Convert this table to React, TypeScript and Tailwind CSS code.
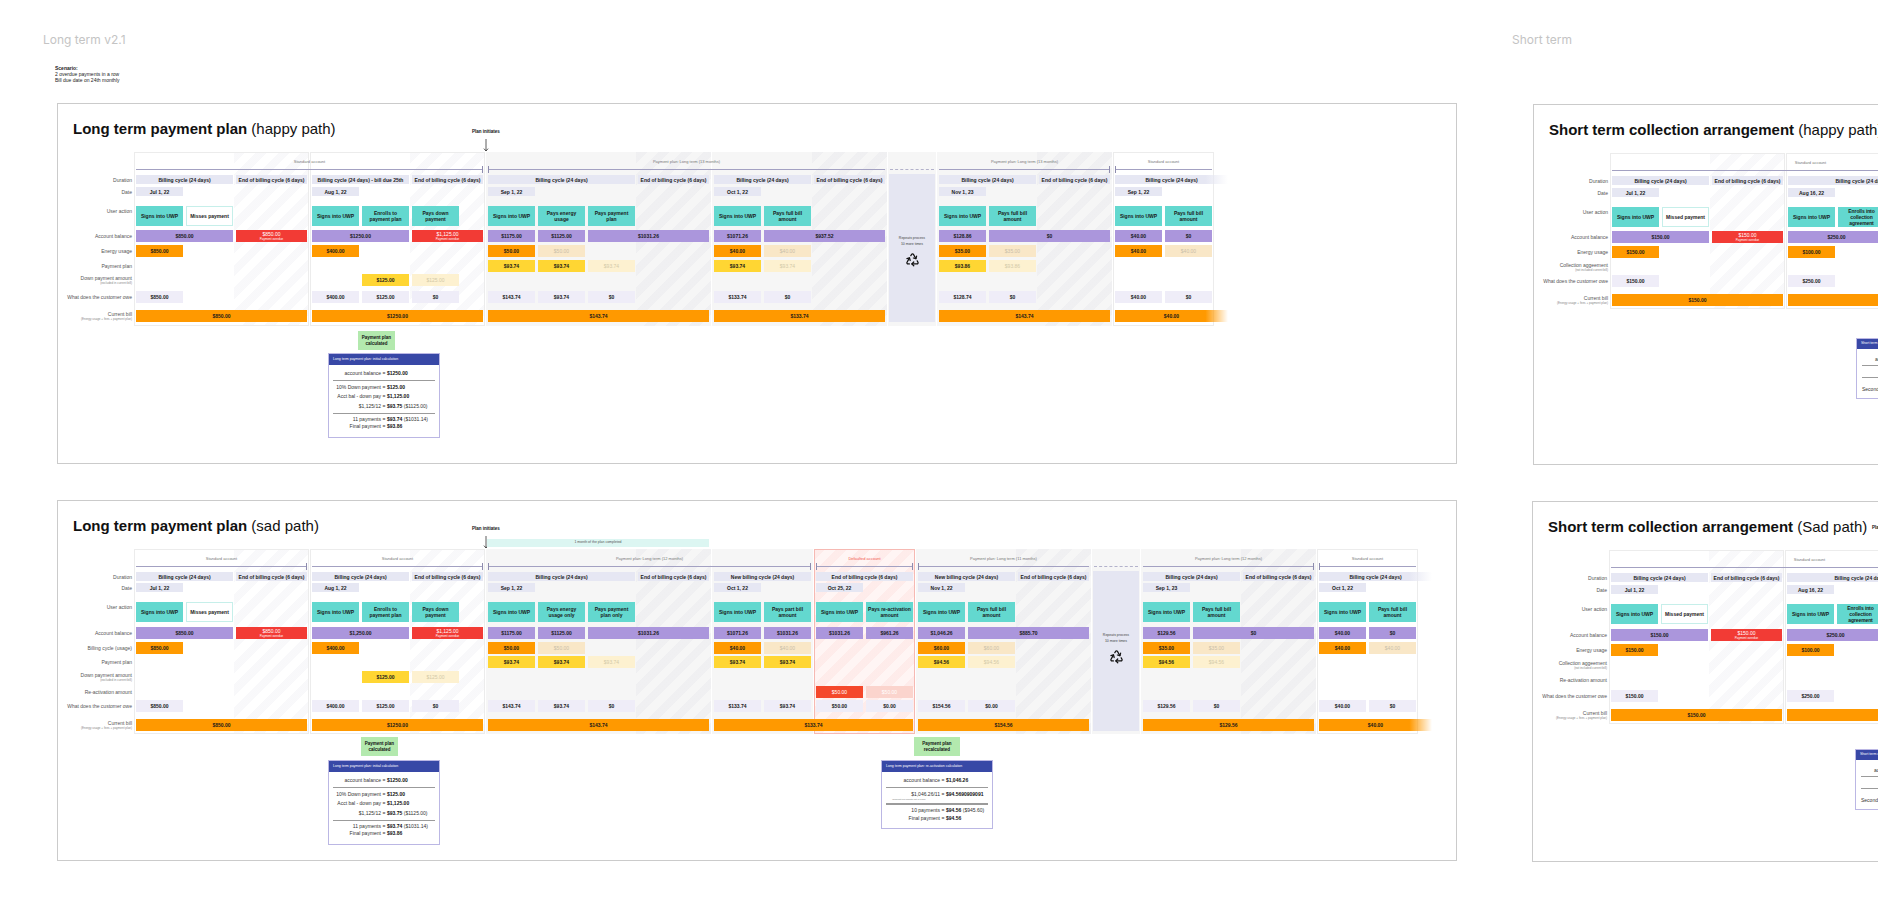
import { Recycle } from "lucide-react";
import type { ReactNode } from "react";

type K = "d" | "df" | "a" | "at" | "m" | "p" | "r" | "o" | "of" | "y" | "yf" | "w" | "x" | "xf" | "b" | "bf" | "bz" | "-";
type CellT = [K, string, string?, string?];
type Sec = { tone: "white" | "gray" | "red" | "repeat"; w: string; cells?: Record<string, CellT[]>; note?: string };
type Group = { label?: string; red?: boolean; l?: boolean; r?: boolean; dashed?: boolean; secs: Sec[] };
type Row = { key: string; label: string; sub?: string; cls: string; top?: boolean };

// cell widths
const A = "w-[47px]";
const AB = "w-[97px]";
const ABC = "w-[147px]";
const C = "w-[71px]";
const BC = "w-[121px]";
const F2 = "w-[171px]";
const F3 = "w-[221px]";
const FADE = "w-[113px]";

// section widths
const S2 = "w-[175px]";
const S3 = "w-[225px]";
const S1 = "w-[101px]";

const KIND: Record<K, string> = {
  d: "bg-[#e6e7f3] font-bold px-[2px]",
  df: "bg-[linear-gradient(to_right,#e6e7f3_80%,rgba(230,231,243,0))] font-bold px-[2px]",
  a: "bg-[#63d8cf] font-bold px-[2px]",
  at: "bg-[#63d8cf] font-bold px-0 tracking-[-0.1px]",
  m: "bg-white font-bold px-[2px] shadow-[inset_0_0_0_1px_#c6efea]",
  p: "bg-[#ab96dc] font-bold px-[2px]",
  r: "bg-[#f23b35] text-white px-[2px]",
  o: "bg-[#ff9a00] font-bold px-[2px]",
  of: "bg-[#f9e7c7] text-[#c9bea9] px-[2px]",
  y: "bg-[#ffd633] font-bold px-[2px]",
  yf: "bg-[#fdf1d0] text-[#d3c9a8] px-[2px]",
  w: "bg-[#efedf8] font-bold px-[2px]",
  x: "bg-[#f5482b] text-white px-[2px]",
  xf: "bg-[#fbd4cd] text-white px-[2px]",
  b: "bg-[#ff9900] font-bold px-[2px]",
  bf: "bg-[linear-gradient(to_right,#ff9900_80%,rgba(255,153,0,0))] font-bold px-[2px]",
  bz: "relative z-10 bg-[#ff9900] font-bold px-[2px]",
  "-": "",
};

const TONE = {
  white: "bg-white shadow-[inset_0_0_0_1px_#ececec]",
  gray: "bg-[#f6f6f6]",
  red: "bg-[#fff5f4] bg-[repeating-linear-gradient(135deg,rgba(242,90,80,0.06)_0px,rgba(242,90,80,0.06)_8px,transparent_8px,transparent_16px)] shadow-[inset_0_0_0_1px_#f6b9b3]",
  repeat: "bg-[#f6f6f6]",
};

const STRIPE =
  "bg-[repeating-linear-gradient(135deg,rgba(90,90,140,0.04)_0px,rgba(90,90,140,0.04)_8px,transparent_8px,transparent_16px)] bg-no-repeat bg-right bg-[length:75px_100%]";

const END = "End of billing cycle (6 days)";
const dur2 = (t = "Billing cycle (24 days)"): CellT[] => [["d", AB, t], ["d", C, END]];
const dur3: CellT[] = [["d", ABC, "Billing cycle (24 days)"], ["d", C, END]];
const date = (t: string): CellT[] => [["d", A, t]];
const signs: CellT = ["a", A, "Signs into UWP"];

/* ---------- long term, happy path ---------- */

const happyRows: Row[] = [
  { key: "dur", label: "Duration", cls: "h-[9px]" },
  { key: "date", label: "Date", cls: "mt-[3px] h-[9px]" },
  { key: "act", label: "User action", cls: "mt-[10px] h-[20px]", top: true },
  { key: "bal", label: "Account balance", cls: "mt-[4px] h-[12px]" },
  { key: "en", label: "Energy usage", cls: "mt-[3px] h-[12px]" },
  { key: "plan", label: "Payment plan", cls: "mt-[3px] h-[12px]" },
  { key: "down", label: "Down payment amount", sub: "(excluded in current bill)", cls: "mt-[2px] h-[12px]" },
  { key: "owe", label: "What does the customer owe", cls: "mt-[5px] h-[12px]" },
  { key: "bill", label: "Current bill", sub: "(Energy usage + fees + payment plan)", cls: "mt-[7px] h-[12px]" },
];

const julSec: Sec = {
  tone: "white",
  w: S2,
  cells: {
    dur: dur2(),
    date: date("Jul 1, 22"),
    act: [signs, ["m", A, "Misses payment"]],
    bal: [["p", AB, "$850.00"], ["r", C, "$850.00", "Payment overdue"]],
    en: [["o", A, "$850.00"]],
    owe: [["w", A, "$850.00"]],
    bill: [["b", F2, "$850.00"]],
  },
};

const augSec = (durText: string, bal: string): Sec => ({
  tone: "white",
  w: S2,
  cells: {
    dur: dur2(durText),
    date: date("Aug 1, 22"),
    act: [signs, ["a", A, "Enrolls to payment plan"], ["a", A, "Pays down payment"]],
    bal: [["p", AB, bal], ["r", C, "$1,125.00", "Payment overdue"]],
    en: [["o", A, "$400.00"]],
    down: [["-", A], ["y", A, "$125.00"], ["yf", A, "$125.00"]],
    owe: [["w", A, "$400.00"], ["w", A, "$125.00"], ["w", A, "$0"]],
    bill: [["b", F2, "$1250.00"]],
  },
});

const sepSec = (a2: string, a3: string): Sec => ({
  tone: "gray",
  w: S3,
  cells: {
    dur: dur3,
    date: date("Sep 1, 22"),
    act: [signs, ["a", A, a2], ["a", A, a3]],
    bal: [["p", A, "$1175.00"], ["p", A, "$1125.00"], ["p", BC, "$1031.26"]],
    en: [["o", A, "$50.00"], ["of", A, "$50.00"]],
    plan: [["y", A, "$93.74"], ["y", A, "$93.74"], ["yf", A, "$93.74"]],
    owe: [["w", A, "$143.74"], ["w", A, "$93.74"], ["w", A, "$0"]],
    bill: [["b", F3, "$143.74"]],
  },
});

const repeat: Sec = { tone: "repeat", w: "w-[48px]", note: "10 more times" };

const lastStd = (d: string): Sec => ({
  tone: "white",
  w: S1,
  cells: {
    dur: [["df", FADE, "Billing cycle (24 days)"]],
    date: date(d),
    act: [signs, ["a", A, "Pays full bill amount"]],
    bal: [["p", A, "$40.00"], ["p", A, "$0"]],
    en: [["o", A, "$40.00"], ["of", A, "$40.00"]],
    owe: [["w", A, "$40.00"], ["w", A, "$0"]],
    bill: [["bf", FADE, "$40.00"]],
  },
});

const happyGroups: Group[] = [
  { label: "Standard account", r: true, secs: [julSec, augSec("Billing cycle (24 days) - bill due 25th", "$1250.00")] },
  {
    label: "Payment plan: Long term (13 months)",
    l: true,
    secs: [
      sepSec("Pays energy usage", "Pays payment plan"),
      {
        tone: "gray",
        w: S2,
        cells: {
          dur: dur2(),
          date: date("Oct 1, 22"),
          act: [signs, ["a", A, "Pays full bill amount"]],
          bal: [["p", A, "$1071.26"], ["p", BC, "$937.52"]],
          en: [["o", A, "$40.00"], ["of", A, "$40.00"]],
          plan: [["y", A, "$93.74"], ["yf", A, "$93.74"]],
          owe: [["w", A, "$133.74"], ["w", A, "$0"]],
          bill: [["b", F2, "$133.74"]],
        },
      },
    ],
  },
  { dashed: true, secs: [repeat] },
  {
    label: "Payment plan: Long term (13 months)",
    r: true,
    secs: [
      {
        tone: "gray",
        w: S2,
        cells: {
          dur: dur2(),
          date: date("Nov 1, 23"),
          act: [signs, ["a", A, "Pays full bill amount"]],
          bal: [["p", A, "$128.86"], ["p", BC, "$0"]],
          en: [["o", A, "$35.00"], ["of", A, "$35.00"]],
          plan: [["y", A, "$93.86"], ["yf", A, "$93.86"]],
          owe: [["w", A, "$128.74"], ["w", A, "$0"]],
          bill: [["b", F2, "$143.74"]],
        },
      },
    ],
  },
  { label: "Standard account", l: true, secs: [lastStd("Sep 1, 22")] },
];

/* ---------- long term, sad path ---------- */

const sadRows: Row[] = [
  { key: "dur", label: "Duration", cls: "h-[9px]" },
  { key: "date", label: "Date", cls: "mt-[2px] h-[9px]" },
  { key: "act", label: "User action", cls: "mt-[10px] h-[20px]", top: true },
  { key: "bal", label: "Account balance", cls: "mt-[5px] h-[12px]" },
  { key: "en", label: "Billing cycle (usage)", cls: "mt-[3px] h-[12px]" },
  { key: "plan", label: "Payment plan", cls: "mt-[2px] h-[12px]" },
  { key: "down", label: "Down payment amount", sub: "(excluded in current bill)", cls: "mt-[3px] h-[12px]" },
  { key: "react", label: "Re-activation amount", cls: "mt-[3px] h-[12px]" },
  { key: "owe", label: "What does the customer owe", cls: "mt-[2px] h-[12px]" },
  { key: "bill", label: "Current bill", sub: "(Energy usage + fees + payment plan)", cls: "mt-[7px] h-[12px]" },
];

const sadGroups: Group[] = [
  { label: "Standard account", r: true, secs: [julSec] },
  { label: "Standard account", r: true, secs: [augSec("Billing cycle (24 days)", "$1,250.00")] },
  {
    label: "Payment plan: Long term (12 months)",
    l: true,
    r: true,
    secs: [
      sepSec("Pays energy usage only", "Pays payment plan only"),
      {
        tone: "gray",
        w: S1,
        cells: {
          dur: [["d", AB, "New billing cycle (24 days)"]],
          date: date("Oct 1, 22"),
          act: [signs, ["a", A, "Pays part bill amount"]],
          bal: [["p", A, "$1071.26"], ["p", A, "$1031.26"]],
          en: [["o", A, "$40.00"], ["of", A, "$40.00"]],
          plan: [["y", A, "$93.74"], ["y", A, "$93.74"]],
          owe: [["w", A, "$133.74"], ["w", A, "$93.74"]],
          bill: [["bz", "w-[199px]", "$133.74"]],
        },
      },
    ],
  },
  {
    label: "Defaulted account",
    red: true,
    l: true,
    r: true,
    secs: [
      {
        tone: "red",
        w: S1,
        cells: {
          dur: [["d", AB, END]],
          date: date("Oct 25, 22"),
          act: [signs, ["a", A, "Pays re-activation amount"]],
          bal: [["p", A, "$1031.26"], ["p", A, "$961.26"]],
          react: [["x", A, "$50.00"], ["xf", A, "$50.00"]],
          owe: [["w", A, "$50.00"], ["w", A, "$0.00"]],
        },
      },
    ],
  },
  {
    label: "Payment plan: Long term (11 months)",
    l: true,
    secs: [
      {
        tone: "gray",
        w: S2,
        cells: {
          dur: dur2("New billing cycle (24 days)"),
          date: date("Nov 1, 22"),
          act: [signs, ["a", A, "Pays full bill amount"]],
          bal: [["p", A, "$1,046.26"], ["p", BC, "$885.70"]],
          en: [["o", A, "$60.00"], ["of", A, "$60.00"]],
          plan: [["y", A, "$94.56"], ["yf", A, "$94.56"]],
          owe: [["w", A, "$154.56"], ["w", A, "$0.00"]],
          bill: [["b", F2, "$154.56"]],
        },
      },
    ],
  },
  { dashed: true, secs: [repeat] },
  {
    label: "Payment plan: Long term (12 months)",
    r: true,
    secs: [
      {
        tone: "gray",
        w: S2,
        cells: {
          dur: dur2(),
          date: date("Sep 1, 23"),
          act: [signs, ["a", A, "Pays full bill amount"]],
          bal: [["p", A, "$129.56"], ["p", BC, "$0"]],
          en: [["o", A, "$35.00"], ["of", A, "$35.00"]],
          plan: [["y", A, "$94.56"], ["yf", A, "$94.56"]],
          owe: [["w", A, "$129.56"], ["w", A, "$0"]],
          bill: [["b", F2, "$129.56"]],
        },
      },
    ],
  },
  { label: "Standard account", l: true, secs: [lastStd("Oct 1, 22")] },
];

/* ---------- short term ---------- */

const shortHappyRows: Row[] = [
  { key: "dur", label: "Duration", cls: "h-[9px]" },
  { key: "date", label: "Date", cls: "mt-[3px] h-[9px]" },
  { key: "act", label: "User action", cls: "mt-[10px] h-[20px]", top: true },
  { key: "bal", label: "Account balance", cls: "mt-[4px] h-[12px]" },
  { key: "en", label: "Energy usage", cls: "mt-[3px] h-[12px]" },
  { key: "coll", label: "Collection aggeement", sub: "(not included current bill)", cls: "mt-[3px] h-[12px]" },
  { key: "owe", label: "What does the customer owe", cls: "mt-[2px] h-[12px]" },
  { key: "bill", label: "Current bill", sub: "(Energy usage + fees + payment plan)", cls: "mt-[7px] h-[12px]" },
];

const shortSadRows: Row[] = [
  { key: "dur", label: "Duration", cls: "h-[9px]" },
  { key: "date", label: "Date", cls: "mt-[3px] h-[9px]" },
  { key: "act", label: "User action", cls: "mt-[10px] h-[20px]", top: true },
  { key: "bal", label: "Account balance", cls: "mt-[5px] h-[12px]" },
  { key: "en", label: "Energy usage", cls: "mt-[3px] h-[12px]" },
  { key: "coll", label: "Collection aggeement", sub: "(not included current bill)", cls: "mt-[3px] h-[12px]" },
  { key: "react", label: "Re-activation amount", cls: "mt-[3px] h-[12px]" },
  { key: "owe", label: "What does the customer owe", cls: "mt-[4px] h-[12px]" },
  { key: "bill", label: "Current bill", sub: "(Energy usage + fees + payment plan)", cls: "mt-[7px] h-[12px]" },
];

const shortGroups: Group[] = [
  {
    label: "Standard account",
    secs: [
      {
        tone: "white",
        w: S2,
        cells: {
          dur: dur2(),
          date: date("Jul 1, 22"),
          act: [signs, ["m", A, "Missed payment"]],
          bal: [["p", AB, "$150.00"], ["r", C, "$150.00", "Payment overdue"]],
          en: [["o", A, "$150.00"]],
          owe: [["w", A, "$150.00"]],
          bill: [["b", F2, "$150.00"]],
        },
      },
      {
        tone: "white",
        w: S3,
        cells: {
          dur: dur3,
          date: date("Aug 16, 22"),
          act: [signs, ["at", A, "Enrolls into collection agreement"]],
          bal: [["p", AB, "$250.00"]],
          en: [["o", A, "$100.00"]],
          owe: [["w", A, "$250.00"]],
          bill: [["b", F3, "$250.00"]],
        },
      },
    ],
  },
];

/* ---------- pieces ---------- */

function Cell({ c }: { c: CellT }) {
  const [k, w, t, sub] = c;
  return (
    <div
      className={`${w} ${KIND[k]} flex h-full shrink-0 flex-col items-center justify-center text-center text-[5px] leading-[6px] text-[#1a1a1a]`}
    >
      {t}
      {sub && <span className="text-[3px] font-normal leading-[4px] text-white">{sub}</span>}
    </div>
  );
}

function Section({ s, rows, pb }: { s: Sec; rows: Row[]; pb: string }) {
  if (s.tone === "repeat") {
    return (
      <div className={`flex ${s.w} shrink-0 bg-[#f6f6f6] px-[1px] pt-[22px] ${pb}`}>
        <div className="flex flex-1 flex-col items-center bg-[#e5e6f2] pt-[61px]">
          <span className="text-center text-[3.5px] leading-[6px] text-[#444]">
            Repeats process
            <br />
            {s.note}
          </span>
          <Recycle className="mt-[5px] h-[15px] w-[15px] text-[#111]" strokeWidth={2} />
        </div>
      </div>
    );
  }
  const stripe = s.w === S1 ? "" : STRIPE;
  return (
    <div className={`${s.w} ${TONE[s.tone]} ${stripe} shrink-0 px-[2px] pt-[23px] ${pb}`}>
      {rows.map((r) => (
        <div key={r.key} className={`flex gap-[3px] ${r.cls}`}>
          {(s.cells?.[r.key] ?? []).map((c, i) => (
            <Cell key={i} c={c} />
          ))}
        </div>
      ))}
    </div>
  );
}

function GroupBlock({ g, rows, pb }: { g: Group; rows: Row[]; pb: string }) {
  return (
    <div className="relative flex shrink-0 gap-[1px]">
      {g.secs.map((s, i) => (
        <Section key={i} s={s} rows={rows} pb={pb} />
      ))}
      <div className="pointer-events-none absolute inset-x-[2px] top-[7px] flex flex-col items-center">
        <span className={`h-[6px] whitespace-nowrap text-[4px] leading-[6px] ${g.red ? "text-[#f2574c]" : "text-[#777]"}`}>
          {g.label}
        </span>
        <div
          className={`mt-px flex h-[7px] w-full items-center border-[#8e8cae] ${g.l ? "border-l" : ""} ${g.r ? "border-r" : ""}`}
        >
          <div className={`w-full ${g.dashed ? "border-t border-dashed border-[#b3b2cb]" : "h-px bg-[#a3a1c2]"}`} />
        </div>
      </div>
    </div>
  );
}

function Table({ rows, groups, pb }: { rows: Row[]; groups: Group[]; pb: string }) {
  return (
    <div className="ml-[2px] mt-[14px] flex">
      <div className={`w-[72px] shrink-0 pt-[23px] ${pb}`}>
        {rows.map((r) => (
          <div
            key={r.key}
            className={`flex flex-col items-end whitespace-nowrap text-right text-[#555] ${r.top ? "justify-start pt-[2px]" : "justify-center"} ${r.cls}`}
          >
            <span className="text-[5px] leading-[6px]">{r.label}</span>
            {r.sub && <span className="text-[3px] leading-[4px] text-[#888]">{r.sub}</span>}
          </div>
        ))}
      </div>
      <div className="ml-[2px] flex shrink-0 gap-[1px]">
        {groups.map((g, i) => (
          <GroupBlock key={i} g={g} rows={rows} pb={pb} />
        ))}
      </div>
    </div>
  );
}

function Frame({ pos, bold, rest, children }: { pos: string; bold: string; rest: string; children: ReactNode }) {
  return (
    <div className={`absolute ${pos} h-[361px] border-[1.5px] border-[#cbcbcb] bg-white`}>
      <div className="whitespace-nowrap pl-[15px] pt-[16px] text-[15px] leading-[18px] text-[#111]">
        <span className="font-bold">{bold}</span> {rest}
      </div>
      {children}
    </div>
  );
}

function PlanInitiates({ pos }: { pos: string }) {
  return (
    <div className={`pointer-events-none absolute ${pos} flex w-[40px] flex-col items-center`}>
      <span className="whitespace-nowrap text-[4.5px] font-bold leading-[6px]">Plan initiates</span>
      <svg className="mt-[4px]" width="6" height="13" viewBox="0 0 6 13">
        <path d="M3 0v12M0.9 9.6 3 12l2.1-2.4" stroke="#333" strokeWidth="0.8" fill="none" />
      </svg>
    </div>
  );
}

function Green({ cls, children }: { cls: string; children: ReactNode }) {
  return (
    <div
      className={`${cls} flex h-[19px] items-center justify-center bg-[#b3e9ae] px-[3px] text-center text-[4.5px] font-bold leading-[5.5px]`}
    >
      {children}
    </div>
  );
}

function Card({ title, cls, children }: { title: string; cls: string; children: ReactNode }) {
  return (
    <div className={`${cls} border border-[#bbb7e4] bg-white`}>
      <div className="flex h-[11px] items-center whitespace-nowrap bg-[#3848a6] px-[4px] text-[3.5px] text-white">{title}</div>
      <div className="px-[4px] text-[5px] leading-[7px] text-[#333]">{children}</div>
    </div>
  );
}

function Eq({ l, v, extra, w = "w-[48px]", cls = "" }: { l: string; v: string; extra?: string; w?: string; cls?: string }) {
  return (
    <div className={`flex h-[7px] items-center whitespace-nowrap ${cls}`}>
      <span className={`${w} shrink-0 text-right`}>{l}</span>
      <span className="px-[1.5px]">=</span>
      <span className="font-bold text-[#111]">{v}</span>
      {extra && <span className="ml-[1.5px]">{extra}</span>}
    </div>
  );
}

function Rule({ cls }: { cls: string }) {
  return <div className={`${cls} bg-[#9b9b9b]`} />;
}

function InitialCalc({ cls }: { cls: string }) {
  return (
    <Card title="Long term payment plan: initial calculation" cls={cls}>
      <Eq l="account balance" v="$1250.00" cls="mt-[5px]" />
      <Rule cls="mt-[3px] h-px" />
      <Eq l="10% Down payment" v="$125.00" cls="mt-[3px]" />
      <Eq l="Acct bal - down pay" v="$1,125.00" cls="mt-[2px]" />
      <Eq l="$1,125/12" v="$93.75" extra="($1125.00)" cls="mt-[3px]" />
      <Rule cls="mt-[3px] h-px" />
      <Eq l="11 payments" v="$93.74" extra="($1031.14)" cls="mt-[2px]" />
      <Eq l="Final payment" v="$93.86" cls="mt-0 mb-[7px]" />
    </Card>
  );
}

function ShortCard({ cls }: { cls: string }) {
  return (
    <div className={`${cls} w-[130px] border border-[#bbb7e4] bg-white`}>
      <div className="flex h-[10px] items-center whitespace-nowrap bg-[#3848a6] px-[4px] text-[3.5px] text-white">
        Short term collection arrangement calculation
      </div>
      <div className="px-[5px] pb-[6px] pt-[7px] text-[5px] leading-[6px] text-[#333]">
        <div className="whitespace-nowrap pl-[13px]">
          account balance = <b className="text-[#111]">$250.00</b>
        </div>
        <Rule cls="mt-[3px] h-px" />
        <div className="mt-[3px] whitespace-nowrap pl-[26px]">
          First payment = <b className="text-[#111]">$125.00</b>
        </div>
        <Rule cls="mt-[2px] h-px" />
        <div className="mt-[8px] whitespace-nowrap">
          Second payment = <b className="text-[#111]">$125.00</b>
        </div>
      </div>
    </div>
  );
}

export default function App() {
  return (
    <div className="relative h-[906px] w-[1878px] overflow-hidden bg-white font-['Liberation_Sans',Arial,sans-serif] text-[#111]">
      <div className="absolute left-[43px] top-[32px] font-['Inter',sans-serif] text-[12px] leading-[16px] text-[#c4c4c4]">
        Long term v2.1
      </div>
      <div className="absolute left-[55px] top-[65px] text-[5px] leading-[6px] text-[#222]">
        <div className="font-bold">Scenario:</div>
        <div>2 overdue payments in a row</div>
        <div>Bill due date on 24th monthly</div>
      </div>
      <div className="absolute left-[1512px] top-[32px] font-['Inter',sans-serif] text-[12px] leading-[16px] text-[#c4c4c4]">
        Short term
      </div>

      <Frame pos="left-[57px] top-[103px] w-[1400px]" bold="Long term payment plan" rest="(happy path)">
        <PlanInitiates pos="left-[408px] top-[25px]" />
        <Table rows={happyRows} groups={happyGroups} pb="pb-[4px]" />
        <div className="ml-[270px] mt-[5px] flex w-[112px] flex-col">
          <Green cls="ml-[30px] w-[37px]">Payment plan calculated</Green>
          <InitialCalc cls="mt-[3px] w-[112px]" />
        </div>
      </Frame>

      <Frame pos="left-[57px] top-[500px] w-[1400px]" bold="Long term payment plan" rest="(sad path)">
        <PlanInitiates pos="left-[408px] top-[25px]" />
        <div className="absolute left-[429px] top-[38px] flex h-[8px] w-[222px] items-center justify-center bg-[#dcf6f2] bg-[radial-gradient(#c2ebe5_0.6px,transparent_0.6px)] bg-[length:2px_2px] text-[3.5px] text-[#555]">
          1 month of the plan completed
        </div>
        <Table rows={sadRows} groups={sadGroups} pb="pb-[3px]" />
        <div className="mt-[3px] flex items-start">
          <div className="ml-[270px] flex w-[112px] flex-col">
            <Green cls="ml-[33px] w-[37px]">Payment plan calculated</Green>
            <InitialCalc cls="mt-[4px] w-[112px]" />
          </div>
          <div className="ml-[441px] flex w-[112px] flex-col">
            <Green cls="ml-[33px] w-[46px]">Payment plan recalculated</Green>
            <Card title="Long term payment plan: re-activation calculation" cls="mt-[4px] w-[112px]">
              <Eq l="account balance" v="$1,046.26" w="w-[54px]" cls="mt-[5px]" />
              <Rule cls="mt-[3px] h-px" />
              <Eq l="$1,046.26/11" v="$94.5690909091" w="w-[54px]" cls="mt-[3px]" />
              <div className="pl-[6px] text-[2.5px] leading-[4px] text-[#777]">(amount payments left in plan)</div>
              <Rule cls="mt-[1px] h-[1.5px]" />
              <Eq l="10 payments" v="$94.56" extra="($945.60)" w="w-[54px]" cls="mt-[2px]" />
              <Eq l="Final payment" v="$94.56" w="w-[54px]" cls="mt-[1px] mb-[6px]" />
            </Card>
          </div>
        </div>
      </Frame>

      <Frame pos="left-[1533px] top-[104px] w-[700px]" bold="Short term collection arrangement" rest="(happy path)">
        <Table rows={shortHappyRows} groups={shortGroups} pb="pb-[3px]" />
        <ShortCard cls="ml-[322px] mt-[29px]" />
      </Frame>

      <Frame pos="left-[1532px] top-[501px] w-[700px]" bold="Short term collection arrangement" rest="(Sad path)">
        <div className="absolute left-[339px] top-[23px] whitespace-nowrap text-[4.5px] font-bold leading-[6px]">
          Plan initiates
        </div>
        <Table rows={shortSadRows} groups={shortGroups} pb="pb-[3px]" />
        <ShortCard cls="ml-[322px] mt-[25px]" />
      </Frame>
    </div>
  );
}
